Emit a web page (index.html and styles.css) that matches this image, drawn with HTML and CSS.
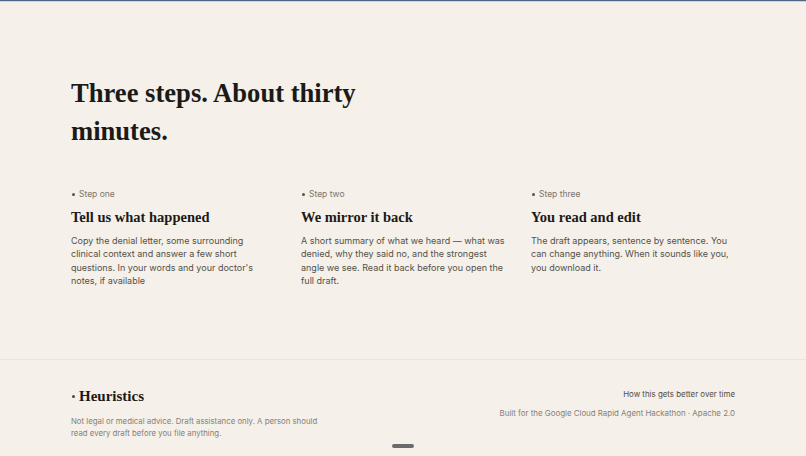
FILE: index.html
```html
<!DOCTYPE html>
<html lang="en">
<head>
<meta charset="utf-8">
<title>Three steps</title>
<link rel="stylesheet" href="styles.css">
</head>
<body>
<div class="topbar"></div>
<main class="page">
  <section class="how">
    <h1 class="headline">Three steps. About thirty<br>minutes.</h1>
    <div class="steps">
      <article class="step">
        <div class="step-label"><span class="dot"></span>Step one</div>
        <h2 class="step-title">Tell us what happened</h2>
        <p class="step-text">Copy the denial letter, some surrounding clinical context and answer a few short questions. In your words and your doctor's notes, if available</p>
      </article>
      <article class="step">
        <div class="step-label"><span class="dot"></span>Step two</div>
        <h2 class="step-title">We mirror it back</h2>
        <p class="step-text">A short summary of what we heard — what was denied, why they said no, and the strongest angle we see. Read it back before you open the full draft.</p>
      </article>
      <article class="step">
        <div class="step-label"><span class="dot"></span>Step three</div>
        <h2 class="step-title">You read and edit</h2>
        <p class="step-text">The draft appears, sentence by sentence. You can change anything. When it sounds like you, you download it.</p>
      </article>
    </div>
  </section>
  <footer class="footer">
    <div class="footer-inner">
      <div class="footer-left">
        <div class="brand"><span class="brand-dot"></span>Heuristics</div>
        <p class="disclaimer">Not legal or medical advice. Draft assistance only. A person should read every draft before you file anything.</p>
      </div>
      <div class="footer-right">
        <a class="footer-link" href="#">How this gets better over time</a>
        <p class="credit">Built for the Google Cloud Rapid Agent Hackathon · Apache 2.0</p>
      </div>
    </div>
  </footer>
</main>
<div class="scroll-handle"></div>
</body>
</html>
```
FILE: styles.css
```css
html, body {
  margin: 0;
  padding: 0;
  background: #f5f0e9;
}
body {
  font-family: Inter, "Noto Sans", sans-serif;
  color: #1c1a17;
  height: 456px;
  overflow: hidden;
}
.topbar {
  height: 1px;
  background: #4d6486;
  border-bottom: 1px solid #c7d4e6;
}
.page {
  display: flex;
  flex-direction: column;
}
.how {
  padding: 72px 71px 0 71px;
  height: 285px;
  border-bottom: 1px solid #ebe5dc;
}
.headline {
  margin: 0;
  font-family: "Liberation Serif", "DejaVu Serif", serif;
  font-weight: 700;
  font-size: 26.6px;
  line-height: 38px;
  color: #1c1a17;
}
.steps {
  display: grid;
  grid-template-columns: repeat(3, 1fr);
  column-gap: 26px;
  margin-top: 38px;
  width: 664px;
}
.step-label {
  display: flex;
  align-items: center;
  gap: 4px;
  font-size: 8.5px;
  color: #7a756e;
  line-height: 12px;
}
.dot {
  width: 3px;
  height: 3px;
  border-radius: 50%;
  background: #4a5a4f;
  margin-left: 1px;
}
.step-title {
  margin: 7px 0 0 0;
  font-family: "Liberation Serif", "DejaVu Serif", serif;
  font-weight: 700;
  font-size: 14.5px;
  line-height: 20px;
  color: #1c1a17;
}
.step-text {
  margin: 7px 0 0 0;
  font-size: 9px;
  line-height: 13.4px;
  color: #53504a;
}
.footer-inner {
  display: flex;
  justify-content: space-between;
  padding: 26px 71px 0 71px;
}
.brand {
  display: flex;
  align-items: center;
  gap: 4px;
  font-family: "Liberation Serif", "DejaVu Serif", serif;
  font-weight: 700;
  font-size: 15px;
  line-height: 20px;
  color: #1c1a17;
}
.brand-dot {
  width: 3px;
  height: 3px;
  border-radius: 50%;
  background: #4a4640;
  margin-left: 1px;
}
.disclaimer {
  margin: 10px 0 0 0;
  width: 256px;
  font-size: 7.8px;
  line-height: 11.8px;
  color: #857f77;
}
.footer-right {
  display: flex;
  flex-direction: column;
  align-items: flex-end;
  padding-top: 2px;
}
.footer-link {
  font-size: 7.9px;
  line-height: 12px;
  color: #4f4b45;
  text-decoration: none;
}
.credit {
  margin: 7px 0 0 0;
  font-size: 7.9px;
  line-height: 12px;
  color: #857f77;
}
.scroll-handle {
  position: absolute;
  left: 392px;
  top: 444px;
  width: 22px;
  height: 4px;
  border-radius: 2px;
  background: #6b6b6b;
}
```
